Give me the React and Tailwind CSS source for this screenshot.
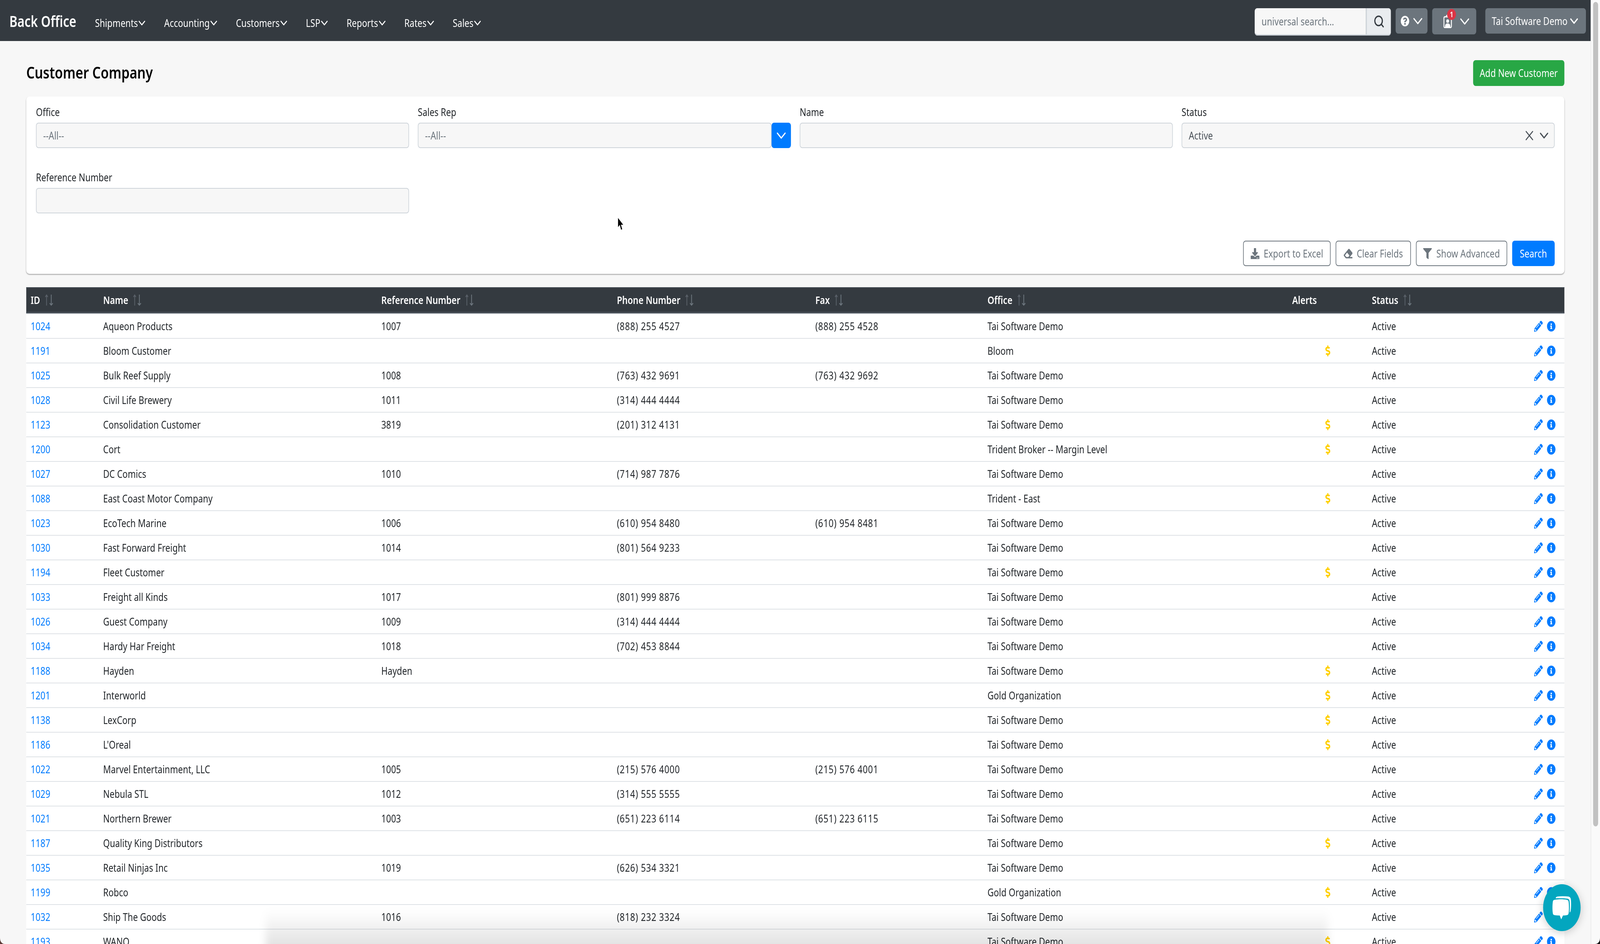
import React from "react";
import { ChevronDown, Search, X } from "lucide-react";
import {
  FaDollarSign,
  FaDownload,
  FaEraser,
  FaFilter,
  FaInfoCircle,
  FaPencilAlt,
  FaQuestionCircle,
} from "react-icons/fa";

const TSD = "Tai Software Demo";

const rows = [
  ["1024", "Aqueon Products", "1007", "(888) 255 4527", "(888) 255 4528", TSD, false],
  ["1191", "Bloom Customer", "", "", "", "Bloom", true],
  ["1025", "Bulk Reef Supply", "1008", "(763) 432 9691", "(763) 432 9692", TSD, false],
  ["1028", "Civil Life Brewery", "1011", "(314) 444 4444", "", TSD, false],
  ["1123", "Consolidation Customer", "3819", "(201) 312 4131", "", TSD, true],
  ["1200", "Cort", "", "", "", "Trident Broker -- Margin Level", true],
  ["1027", "DC Comics", "1010", "(714) 987 7876", "", TSD, false],
  ["1088", "East Coast Motor Company", "", "", "", "Trident - East", true],
  ["1023", "EcoTech Marine", "1006", "(610) 954 8480", "(610) 954 8481", TSD, false],
  ["1030", "Fast Forward Freight", "1014", "(801) 564 9233", "", TSD, false],
  ["1194", "Fleet Customer", "", "", "", TSD, true],
  ["1033", "Freight all Kinds", "1017", "(801) 999 8876", "", TSD, false],
  ["1026", "Guest Company", "1009", "(314) 444 4444", "", TSD, false],
  ["1034", "Hardy Har Freight", "1018", "(702) 453 8844", "", TSD, false],
  ["1188", "Hayden", "Hayden", "", "", TSD, true],
  ["1201", "Interworld", "", "", "", "Gold Organization", true],
  ["1138", "LexCorp", "", "", "", TSD, true],
  ["1186", "L'Oreal", "", "", "", TSD, true],
  ["1022", "Marvel Entertainment, LLC", "1005", "(215) 576 4000", "(215) 576 4001", TSD, false],
  ["1029", "Nebula STL", "1012", "(314) 555 5555", "", TSD, false],
  ["1021", "Northern Brewer", "1003", "(651) 223 6114", "(651) 223 6115", TSD, false],
  ["1187", "Quality King Distributors", "", "", "", TSD, true],
  ["1035", "Retail Ninjas Inc", "1019", "(626) 534 3321", "", TSD, false],
  ["1199", "Robco", "", "", "", "Gold Organization", true],
  ["1032", "Ship The Goods", "1016", "(818) 232 3324", "", TSD, false],
  ["1193", "WANO", "", "", "", TSD, true],
];

const navItems = ["Shipments", "Accounting", "Customers", "LSP", "Reports", "Rates", "Sales"];

const columns = [
  { label: "ID", sort: true },
  { label: "Name", sort: true },
  { label: "Reference Number", sort: true },
  { label: "Phone Number", sort: true },
  { label: "Fax", sort: true },
  { label: "Office", sort: true },
  { label: "Alerts", sort: false },
  { label: "Status", sort: true },
  { label: "", sort: false },
];

const rowGrid = "grid grid-cols-[232px_890px_754px_635px_551px_975px_255px_400px_230px] items-center";

const SortIcon = () => (
  <svg width="28" height="30" viewBox="0 0 28 30" fill="none" className="ml-4 inline-block">
    <path d="M5 29V2M1 7l4-5 4 5" stroke="#596068" strokeWidth="2.5" />
    <path d="M20 1v27M15 23l5 5 5-5" stroke="#6c757d" strokeWidth="2.5" />
  </svg>
);

const ClipboardUser = () => (
  <svg width="28" height="34" viewBox="0 0 28 34" fill="none">
    <rect x="1.5" y="5" width="24" height="27.5" rx="3" stroke="white" strokeWidth="3" />
    <path d="M9 5a4.5 4.5 0 0 1 9 0" stroke="white" strokeWidth="3" />
    <circle cx="13.5" cy="16" r="4.5" fill="white" />
    <path d="M5 31c0-7 3-9 8.500-9s8.500 2 8.500 9z" fill="white" />
  </svg>
);

const Field = ({ label, children }) => (
  <div>
    <div className="mb-2 h-[39px] leading-[39px] text-[#212529]">{label}</div>
    {children}
  </div>
);

const ReadonlyBox = ({ text, children, className = "rounded-lg" }) => (
  <div
    className={
      "flex h-[65px] items-center border-2 border-[#ced4da] bg-[#f7f7f7] pl-[21px] pr-[20px] text-[#6c757d] " +
      className
    }
  >
    <span className="flex-1">{text}</span>
    {children}
  </div>
);

const OutlineButton = ({ icon, children, width }) => (
  <button
    className={
      "flex h-[65px] items-center justify-center gap-[14px] rounded-lg border-2 border-[#6c757d] bg-white text-[#6c757d] " +
      width
    }
  >
    {icon}
    {children}
  </button>
);

const NavBar = () => (
  <header className="flex h-[105px] shrink-0 items-start bg-[#343a40] pl-[30px] pr-[15px] text-white">
    <div className="mt-[30px] w-[274px] text-[39px] leading-[48px] font-semibold">Back Office</div>
    <nav className="mt-[39px] flex gap-[62px] leading-[40px]">
      {navItems.map((item) => (
        <div key={item} className="flex items-center">
          {item}
          <ChevronDown size={36} strokeWidth={2} className="-ml-[5px] -mr-[9px]" />
        </div>
      ))}
    </nav>
    <div className="ml-auto mt-[21px] flex items-start">
      <div className="flex h-[70px] w-[436px] overflow-hidden rounded-lg border-b-[3px] border-[#ced4da]">
        <input
          placeholder="universal search..."
          className="h-full w-[356px] bg-[#f7f7f7] pl-[22px] text-[27.5px] outline-none placeholder:text-[#6c757d]"
        />
        <div className="flex flex-1 items-center justify-center border-l-[3px] border-[#ced4da] bg-[#e9ecef] text-[#343a40]">
          <Search size={36} strokeWidth={2.4} />
        </div>
      </div>
      <div className="ml-[15px] flex h-[65px] w-[102px] items-center gap-[2px] rounded-lg bg-[#6c757d] pl-[16px]">
        <FaQuestionCircle size={28} />
        <ChevronDown size={50} strokeWidth={1.6} />
      </div>
      <div className="relative ml-[15px] flex h-[67px] w-[141px] items-center rounded-lg bg-[#6c757d] pl-[36px]">
        <ClipboardUser />
        <span className="absolute left-[48px] top-[2px] flex h-[28px] w-[28px] items-center justify-center rounded-full bg-[#dc3545] text-[20px] font-semibold">
          1
        </span>
        <ChevronDown size={50} strokeWidth={1.6} className="ml-[15px]" />
      </div>
      <div className="ml-[29px] flex h-[65px] w-[322px] items-center justify-center rounded-lg bg-[#6c757d] pl-[4px]">
        Tai Software Demo
        <ChevronDown size={42} strokeWidth={2.1} />
      </div>
    </div>
  </header>
);

const Filters = () => (
  <section className="rounded-[10px] bg-white px-[31px] pb-[20px] pt-[20px] shadow-[0_2px_3px_rgba(0,0,0,0.35)]">
    <div className="grid grid-cols-4 gap-x-[28px] gap-y-[55px]">
      <Field label="Office">
        <ReadonlyBox text="--All--" />
      </Field>
      <Field label="Sales Rep">
        <div className="flex">
          <ReadonlyBox text="--All--" className="flex-1 rounded-lg" />
          <div className="flex h-[65px] w-[62px] items-center justify-center rounded-lg bg-[#007bff] text-white">
            <ChevronDown size={50} strokeWidth={1.6} />
          </div>
        </div>
      </Field>
      <Field label="Name">
        <ReadonlyBox text="" />
      </Field>
      <Field label="Status">
        <ReadonlyBox text="Active" className="rounded-lg text-[#495057]">
          <X size={42} strokeWidth={1.7} className="text-[#495057]" />
          <ChevronDown size={46} strokeWidth={1.8} className="-mr-[11px] ml-[3px] text-[#495057]" />
        </ReadonlyBox>
      </Field>
      <Field label="Reference Number">
        <ReadonlyBox text="" />
      </Field>
    </div>
    <div className="mt-[70px] flex justify-end gap-[16px]">
      <OutlineButton width="w-[280px]" icon={<FaDownload size={28} />}>
        Export to Excel
      </OutlineButton>
      <OutlineButton width="w-[241px]" icon={<FaEraser size={28} />}>
        Clear Fields
      </OutlineButton>
      <OutlineButton width="w-[292px]" icon={<FaFilter size={28} />}>
        Show Advanced
      </OutlineButton>
      <button className="h-[65px] w-[136px] rounded-lg bg-[#007bff] text-white">Search</button>
    </div>
  </section>
);

const CustomerTable = () => (
  <div className="mt-[34px] bg-white text-[#212529]">
    <div className={rowGrid + " h-[67px] border-y-2 border-b-4 border-[#454d55] bg-[#343a40] font-semibold text-white"}>
      {columns.map((col, i) => (
        <div key={i} className="flex items-center pl-[14px]">
          {col.label}
          {col.sort && <SortIcon />}
        </div>
      ))}
    </div>
    <div className="border-t-2 border-[#dee2e6]">
      {rows.map((row) => (
        <div key={row[0]} className={rowGrid + " h-[63px] border-b-2 border-[#dee2e6] pl-[14px]"}>
          <div className="text-[#007bff]">{row[0]}</div>
          <div>{row[1]}</div>
          <div>{row[2]}</div>
          <div className="tracking-[1px]">{row[3]}</div>
          <div className="tracking-[1px]">{row[4]}</div>
          <div>{row[5]}</div>
          <div className="text-[#ffd000]">
            {row[6] && <FaDollarSign size={28} className="mx-auto -translate-x-[14px]" />}
          </div>
          <div>Active</div>
          <div className="flex items-center justify-end gap-[13px] pr-[42px] text-[#007bff]">
            <FaPencilAlt size={28} />
            <FaInfoCircle size={28} />
          </div>
        </div>
      ))}
    </div>
  </div>
);

export default function App() {
  // the page is drawn on the reference's 5120 wide grid, then fitted to the real window width
  const fit = window.innerWidth / 5120;

  return (
    <div
      className="relative flex h-[2416px] w-[5120px] origin-top-left overflow-hidden bg-[#f7f7f7] text-[27.5px] [font-family:Inter,'Liberation_Sans',sans-serif]"
      style={{ transform: `scaleX(${fit})` }}
    >
      <div className="flex w-[5090px] shrink-0 flex-col">
        <NavBar />
        <main className="px-[84px]">
          <div className="flex h-[142px] items-start justify-between pt-[49px]">
            <h1 className="mt-[6px] text-[42px] leading-[50px] font-semibold text-black">Customer Company</h1>
            <button className="h-[66px] w-[292px] rounded-lg bg-[#28a745] text-white">Add New Customer</button>
          </div>
          <Filters />
          <CustomerTable />
        </main>
      </div>

      {/* browser scrollbar */}
      <div className="flex-1 border-l-2 border-[#ececec] bg-[#fafafa] px-[6px] pt-[5px]">
        <div className="h-[2110px] rounded-full bg-[#c1c1c1]" />
      </div>

      {/* mouse cursor */}
      <svg width="24" height="38" viewBox="0 0 24 38" className="absolute left-[1974px] top-[554px]">
        <path d="M3 2v27l6-6 4 12 5-2-4-11h8z" fill="black" stroke="white" strokeWidth="1.500" />
      </svg>

      {/* dock shadow along the bottom edge */}
      <div className="absolute left-[850px] top-[2330px] h-[120px] w-[3400px] bg-linear-to-b from-black/0 to-black/15 blur-[12px]" />

      {/* chat launcher */}
      <div className="absolute left-[4938px] top-[2263px] h-[120px] w-[120px] rounded-full bg-[#03a6bf] shadow-[0_4px_24px_rgba(0,0,0,0.2)]">
        <svg width="120" height="120" viewBox="0 0 120 120" fill="white">
          <path d="M36 40c14-2 28-2 40 0 3 .5 5 2 5.500 5 1.500 10 1.500 22 0 29-.5 3-2 4.500-5 5-4 .6-9 1-13 1l-5.500 10-5-10c-6 0-12-.4-17-1-3-.5-4.500-2-5-5-1.500-8-1.500-20 0-29 .5-3 2-4.500 5-5z" />
          <path d="M40 36c1-3 3-4 6-4.500 11-1 24-1 35 0 4 .5 6.500 2.500 7.500 6 1.500 9 1.500 22-.5 31-.5 2-1.500 3-3 4 1-11 1-23-.5-30-.5-3-3-5-6-5.500-12-1.500-26-1.500-38-1z" />
        </svg>
      </div>

      {/* window corners */}
      <svg width="16" height="16" viewBox="0 0 16 16" className="absolute bottom-0 left-0">
        <path d="M0 0c0 10 6 16 16 16H0z" fill="#5a3a36" />
      </svg>
      <svg width="16" height="16" viewBox="0 0 16 16" className="absolute bottom-0 right-0">
        <path d="M16 0c0 10-6 16-16 16h16z" fill="#111" />
      </svg>
    </div>
  );
}
